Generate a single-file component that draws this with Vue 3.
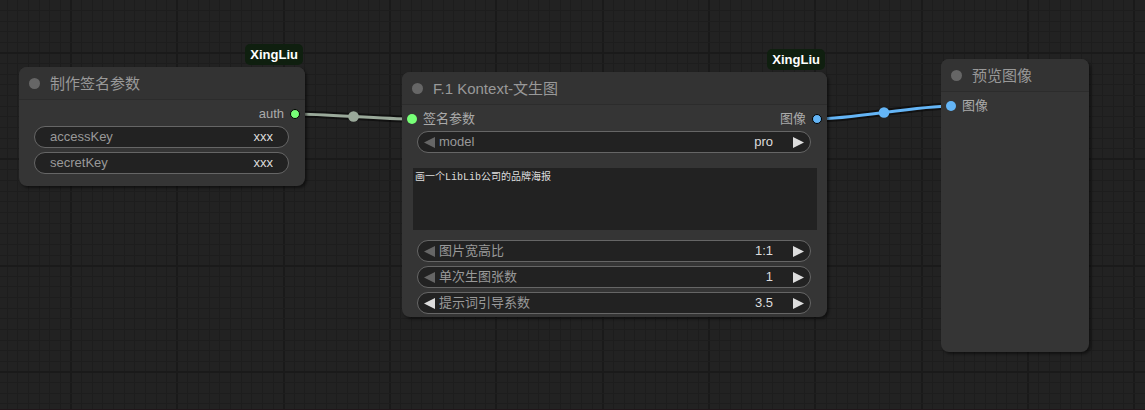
<script setup>
import { ref, computed, onMounted, onBeforeUnmount } from 'vue'

const scale = 1.0635
const origin = { x: 71, y: 53 }
const size = ref({ w: window.innerWidth, h: window.innerHeight })

function measure() {
  size.value = { w: window.innerWidth, h: window.innerHeight }
}
onMounted(() => window.addEventListener('resize', measure))
onBeforeUnmount(() => window.removeEventListener('resize', measure))

function gridLines(start, length) {
  const step = 10 * scale
  const lines = []
  for (let i = -Math.floor(start / step); start + i * step < length; i++) {
    const major = i % 10 === 0
    const at = start + i * step
    lines.push({ at: major ? Math.round(at) - 1 : Math.floor(at), major })
  }
  return lines
}
const columns = computed(() => gridLines(origin.x, size.value.w))
const rows = computed(() => gridLines(origin.y, size.value.h))

const nodes = ref([
  {
    id: 'sign', x: 19, y: 67, w: 286, h: 119, title: '制作签名参数', badge: 'XingLiu',
    output: { label: 'auth', color: 'green' },
    widgets: [
      { id: 'accessKey', type: 'text', label: 'accessKey', value: 'xxx' },
      { id: 'secretKey', type: 'text', label: 'secretKey', value: 'xxx' }
    ]
  },
  {
    id: 'kontext', x: 402, y: 72, w: 425, h: 245, title: 'F.1 Kontext-文生图', badge: 'XingLiu',
    input: { label: '签名参数', color: 'green' },
    output: { label: '图像', color: 'blue' },
    widgets: [
      { id: 'model', type: 'combo', label: 'model', value: 'pro', options: ['pro', 'max'], first: true },
      { id: 'prompt', type: 'area', label: '提示词', value: '画一个LibLib公司的品牌海报' },
      { id: 'ratio', type: 'combo', label: '图片宽高比', value: '1:1', options: ['1:1', '4:3', '16:9'], first: true },
      { id: 'count', type: 'number', label: '单次生图张数', value: '1', first: true },
      { id: 'guidance', type: 'number', label: '提示词引导系数', value: '3.5' }
    ]
  },
  {
    id: 'preview', x: 941, y: 59, w: 148, h: 293, title: '预览图像',
    input: { label: '图像', color: 'blue' },
    widgets: []
  }
])

const SLOT_Y = 47
const SLOT_X = 10
const links = computed(() =>
  [[0, 1, 'gray'], [1, 2, 'blue']].map(([from, to, color]) => {
    const a = nodes.value[from]
    const b = nodes.value[to]
    const x1 = a.x + a.w - SLOT_X
    const y1 = a.y + SLOT_Y
    const x2 = b.x + SLOT_X
    const y2 = b.y + SLOT_Y
    const bend = Math.hypot(x2 - x1, y2 - y1) / 4
    return {
      color,
      d: `M${x1} ${y1} C${x1 + bend} ${y1} ${x2 - bend} ${y2} ${x2} ${y2}`,
      cx: (x1 + x2) / 2,
      cy: (y1 + y2) / 2
    }
  })
)

function step(widget, dir) {
  if (widget.type === 'combo') {
    const next = widget.options.indexOf(widget.value) + dir
    if (widget.options[next]) widget.value = widget.options[next]
  } else {
    widget.value = String(Number(widget.value) + dir)
  }
}
</script>

<template>
  <main class="board">
    <svg class="layer" aria-hidden="true">
      <g shape-rendering="crispEdges">
        <rect v-for="c in columns" :key="'c' + c.at" :x="c.at" y="0" :width="c.major ? 2 : 1" height="100%" :class="c.major ? 'major' : 'minor'" />
        <rect v-for="r in rows" :key="'r' + r.at" x="0" :y="r.at" width="100%" :height="r.major ? 2 : 1" :class="r.major ? 'major' : 'minor'" />
      </g>
      <g v-for="link in links" :key="link.d" :class="['link', link.color]">
        <path class="halo" :d="link.d" />
        <path class="wire" :d="link.d" />
        <circle :cx="link.cx" :cy="link.cy" r="5.3" />
      </g>
    </svg>

    <section
      v-for="node in nodes"
      :key="node.id"
      class="node"
      :style="{ left: node.x + 'px', top: node.y + 'px', width: node.w + 'px', minHeight: node.h + 'px' }"
    >
      <span v-if="node.badge" class="badge">{{ node.badge }}</span>
      <header class="title">
        <span class="state"></span>
        <h2>{{ node.title }}</h2>
      </header>
      <div class="slots">
        <span v-if="node.input" class="slot">
          <i :class="['dot', node.input.color]"></i>{{ node.input.label }}
        </span>
        <span v-if="node.output" class="slot out">
          {{ node.output.label }}<i :class="['dot', 'ring', node.output.color]"></i>
        </span>
      </div>
      <div v-if="node.widgets.length" class="widgets">
        <template v-for="w in node.widgets" :key="w.id">
          <textarea v-if="w.type === 'area'" v-model="w.value" class="prompt" :aria-label="w.label" spellcheck="false"></textarea>
          <div v-else class="widget">
            <button v-if="w.type !== 'text'" type="button" :class="['arrow', { off: w.first }]" :aria-label="w.label + ' −'" @click="step(w, -1)">
              <svg viewBox="0 0 11 11"><path d="M11 0 V11 L0 5.5 Z" /></svg>
            </button>
            <label :for="w.id">{{ w.label }}</label>
            <select v-if="w.type === 'combo'" :id="w.id" v-model="w.value">
              <option v-for="o in w.options" :key="o">{{ o }}</option>
            </select>
            <input v-else :id="w.id" v-model="w.value" type="text" />
            <button v-if="w.type !== 'text'" type="button" class="arrow next" :aria-label="w.label + ' +'" @click="step(w, 1)">
              <svg viewBox="0 0 11 11"><path d="M0 0 V11 L11 5.5 Z" /></svg>
            </button>
          </div>
        </template>
      </div>
    </section>
  </main>
</template>

<style>
body {
  background: #222;
}
</style>

<style scoped>
.board {
  position: relative;
  box-sizing: border-box;
  min-height: 100vh;
  overflow: hidden;
  background: #222;
  border-bottom: 1px solid #21161a;
  font: 13px/20px "Liberation Sans", "Noto Sans CJK SC", sans-serif;
  color: #aaa;
}
.layer {
  position: absolute;
  inset: 0;
  width: 100%;
  height: 100%;
}
.minor { fill: #1d1d1d; }
.major { fill: #1a1a1a; }
.link path { fill: none; }
.link .halo { stroke: #000; stroke-opacity: 0.5; stroke-width: 7; }
.link .wire { stroke-width: 3.2; }
.link.gray .wire { stroke: #9aa99a; }
.link.gray circle { fill: #9aa99a; }
.link.blue .wire { stroke: #64b5f6; }
.link.blue circle { fill: #64b5f6; }

.node {
  position: absolute;
  box-sizing: border-box;
  background: #353535;
  border-radius: 8px;
  box-shadow: 2px 2px 3px rgba(0, 0, 0, 0.5);
}
.badge {
  position: absolute;
  right: 2px;
  bottom: calc(100% + 2px);
  padding: 0 5px;
  border-radius: 5px;
  background: #0f1f0f;
  color: #fff;
  font-weight: 700;
  line-height: 21px;
}
.title {
  display: flex;
  align-items: center;
  gap: 10px;
  height: 32px;
  padding: 0 10px;
  background: #333;
  border-bottom: 1px solid #2c2c2c;
  border-radius: 8px 8px 0 0;
}
.state {
  width: 11px;
  height: 11px;
  border-radius: 50%;
  background: #666;
}
h2 {
  margin: 0;
  padding-top: 2px;
  font-size: 15px;
  font-weight: 400;
  line-height: 24px;
  color: #999;
}
.slots {
  display: flex;
  padding: 4px 5px 0;
}
.slot {
  display: flex;
  align-items: center;
  gap: 6px;
}
.out { margin-left: auto; }
.dot {
  box-sizing: border-box;
  width: 10px;
  height: 10px;
  border-radius: 50%;
}
.dot.ring { border: 1px solid #000; }
.green { background: #7f7; }
.dot.blue { background: #64b5f6; }

.widgets {
  display: flex;
  flex-direction: column;
  gap: 4px;
  padding: 2px 16px 3px 15px;
}
.widget {
  display: flex;
  align-items: center;
  box-sizing: border-box;
  height: 22px;
  padding: 0 15px;
  background: #222;
  border: 1px solid #666;
  border-radius: 11px;
  color: #999;
}
.widget:has(.arrow) { padding: 0 6px; }
.widget label { flex: none; }
.widget input,
.widget select {
  flex: 1;
  min-width: 0;
  height: 20px;
  margin: 0;
  padding: 0;
  border: 0;
  outline: 0;
  appearance: none;
  background: transparent;
  color: #ddd;
  font: inherit;
  text-align: right;
  text-align-last: right;
}
.arrow {
  display: flex;
  flex: none;
  margin: 0 4px 0 0;
  padding: 0;
  border: 0;
  background: none;
  color: #ddd;
}
.arrow.off { color: #666; }
.arrow.next { margin: 0 0 0 20px; }
.arrow svg {
  width: 11px;
  height: 11px;
  fill: currentColor;
}
.prompt {
  box-sizing: border-box;
  height: 62px;
  margin: 11px -6px 6px -4px;
  padding: 3px 2px;
  border: 0;
  outline: 0;
  resize: none;
  background: #222;
  color: #ddd;
  font: 10px/13px "Liberation Mono", "Noto Sans CJK SC", monospace;
}
</style>
